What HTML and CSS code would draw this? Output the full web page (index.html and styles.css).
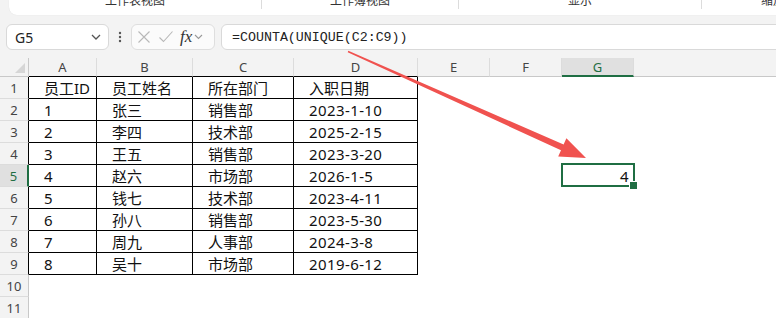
FILE: index.html
```html
<!DOCTYPE html>
<html lang="zh-CN">
<head>
<meta charset="utf-8">
<title>COUNTA UNIQUE</title>
<link rel="stylesheet" href="styles.css">
</head>
<body>
<div class="ribbon">
  <div class="rgroup g1"><span class="rlabel">工作表视图</span></div><span class="sep"></span>
  <div class="rgroup g2"><span class="rlabel">工作簿视图</span></div><span class="sep"></span>
  <div class="rgroup g3"><span class="rlabel">显示</span></div><span class="sep"></span>
  <div class="rgroup g4"><span class="rlabel">缩放</span></div>
</div>

<div class="fbar">
  <div class="namebox">
    <span class="ref">G5</span>
    <svg class="chev" width="10" height="6" viewBox="0 0 10 6"><path d="M1 1 L5 5 L9 1" fill="none" stroke="#555" stroke-width="1.3"/></svg>
  </div>
  <div class="dots">
    <svg width="4" height="12" viewBox="0 0 4 12"><circle cx="2" cy="2" r="1.2" fill="#555"/><circle cx="2" cy="6" r="1.2" fill="#555"/><circle cx="2" cy="10" r="1.2" fill="#555"/></svg>
  </div>
  <div class="fxbox">
    <svg class="ico" width="14" height="14" viewBox="0 0 14 14"><path d="M1.5 1.5 L12.5 12.5 M12.5 1.5 L1.5 12.5" stroke="#b8b8b8" stroke-width="1.1" fill="none"/></svg>
    <svg class="ico" width="16" height="14" viewBox="0 0 16 14"><path d="M1.5 7.5 L5.5 11.5 L14.5 1.5" stroke="#b8b8b8" stroke-width="1.1" fill="none"/></svg>
    <span class="fx">fx</span>
    <svg class="chev2" width="9" height="6" viewBox="0 0 9 6"><path d="M1 1 L4.5 4.5 L8 1" fill="none" stroke="#999" stroke-width="1.1"/></svg>
  </div>
  <div class="formula"><span class="ftext">=COUNTA(UNIQUE(C2:C9))</span></div>
</div>

<div class="sheet">
  <div class="corner"><span class="tri"></span></div>
  <div class="ch tb">A</div><div class="ch tb">B</div><div class="ch tb">C</div><div class="ch tb">D</div><div class="ch">E</div><div class="ch">F</div><div class="ch sel">G</div><div class="ch last"></div>

  <div class="rh tb">1</div><div class="cell tb">员工ID</div><div class="cell tb">员工姓名</div><div class="cell tb">所在部门</div><div class="cell tb">入职日期</div><div class="cell"></div><div class="cell"></div><div class="cell"></div><div class="cell"></div>
  <div class="rh tb">2</div><div class="cell tb num">1</div><div class="cell tb">张三</div><div class="cell tb">销售部</div><div class="cell tb num">2023-1-10</div><div class="cell"></div><div class="cell"></div><div class="cell"></div><div class="cell"></div>
  <div class="rh tb">3</div><div class="cell tb num">2</div><div class="cell tb">李四</div><div class="cell tb">技术部</div><div class="cell tb num">2025-2-15</div><div class="cell"></div><div class="cell"></div><div class="cell"></div><div class="cell"></div>
  <div class="rh tb">4</div><div class="cell tb num">3</div><div class="cell tb">王五</div><div class="cell tb">销售部</div><div class="cell tb num">2023-3-20</div><div class="cell"></div><div class="cell"></div><div class="cell"></div><div class="cell"></div>
  <div class="rh tb sel">5</div><div class="cell tb num">4</div><div class="cell tb">赵六</div><div class="cell tb">市场部</div><div class="cell tb num">2026-1-5</div><div class="cell"></div><div class="cell"></div><div class="cell active num">4</div><div class="cell"></div>
  <div class="rh tb">6</div><div class="cell tb num">5</div><div class="cell tb">钱七</div><div class="cell tb">技术部</div><div class="cell tb num">2023-4-11</div><div class="cell"></div><div class="cell"></div><div class="cell"></div><div class="cell"></div>
  <div class="rh tb">7</div><div class="cell tb num">6</div><div class="cell tb">孙八</div><div class="cell tb">销售部</div><div class="cell tb num">2023-5-30</div><div class="cell"></div><div class="cell"></div><div class="cell"></div><div class="cell"></div>
  <div class="rh tb">8</div><div class="cell tb num">7</div><div class="cell tb">周九</div><div class="cell tb">人事部</div><div class="cell tb num">2024-3-8</div><div class="cell"></div><div class="cell"></div><div class="cell"></div><div class="cell"></div>
  <div class="rh tb">9</div><div class="cell tb num">8</div><div class="cell tb">吴十</div><div class="cell tb">市场部</div><div class="cell tb num">2019-6-12</div><div class="cell"></div><div class="cell"></div><div class="cell"></div><div class="cell"></div>
  <div class="rh">10</div><div class="cell"></div><div class="cell"></div><div class="cell"></div><div class="cell"></div><div class="cell"></div><div class="cell"></div><div class="cell"></div><div class="cell"></div>
  <div class="rh">11</div><div class="cell"></div><div class="cell"></div><div class="cell"></div><div class="cell"></div><div class="cell"></div><div class="cell"></div><div class="cell"></div><div class="cell"></div>
</div>

<svg class="arrow" width="776" height="318" viewBox="0 0 776 318">
  <polygon points="348.3,50.8 563.6,144.5 566.4,138.3 586,158 558.2,156.5 561,150.3 347.7,52.2" fill="#f0524f"/>
</svg>
</body>
</html>
```

FILE: styles.css
```css
* { box-sizing: border-box; }

html, body {
  margin: 0;
  padding: 0;
  width: 776px;
  height: 318px;
  overflow: hidden;
}

body {
  position: relative;
  background: #f3f3f3;
  font-family: "Noto Sans", "Noto Sans CJK SC", sans-serif;
  color: #222;
}

/* ribbon strip (cut at top) */
.ribbon {
  display: flex;
  align-items: flex-start;
  height: 15px;
  margin-left: 9px;
  margin-right: -40px;
  background: #fff;
  border-radius: 0 0 8px 8px;
  overflow: hidden;
  box-shadow: 0 0 1px rgba(0,0,0,0.12);
}

.rgroup {
  display: flex;
  justify-content: center;
  flex: none;
}
.g1 { width: 252px; }
.g2 { width: 196px; }
.g3 { width: 242px; }
.g4 { width: 142px; }

.rlabel {
  font-size: 12px;
  line-height: 14px;
  margin-top: -6px;
  color: #333;
  white-space: nowrap;
}

.sep {
  flex: none;
  width: 1px;
  height: 9px;
  background: #dcdcdc;
}

/* formula bar */
.fbar {
  display: flex;
  align-items: stretch;
  height: 26px;
  margin-top: 9px;
  padding-left: 6px;
}

.namebox {
  flex: none;
  width: 103px;
  display: flex;
  align-items: center;
  justify-content: space-between;
  padding: 0 7px 0 8px;
  background: #fff;
  border: 1px solid #d9d9d9;
  border-radius: 6px;
}

.ref {
  font-size: 14px;
  color: #222;
}

.dots {
  flex: none;
  width: 22px;
  display: flex;
  align-items: center;
  justify-content: center;
}

.fxbox {
  flex: none;
  width: 84px;
  display: flex;
  align-items: center;
  padding-left: 5px;
  background: #fbfbfb;
  border: 1px solid #dedede;
  border-radius: 6px;
}
.fxbox .ico { flex: none; margin-right: 7px; }
.fxbox .ico + .ico { margin-right: 6px; }

.fx {
  font-family: "Liberation Serif", "DejaVu Serif", serif;
  font-style: italic;
  font-size: 17px;
  color: #333;
  line-height: 20px;
  margin-right: 2px;
}

.formula {
  flex: 1;
  margin-left: 6px;
  margin-right: -20px;
  display: flex;
  align-items: center;
  padding-left: 10px;
  background: #fff;
  border: 1px solid #d9d9d9;
  border-radius: 6px;
}

.ftext {
  font-family: "Liberation Mono", "DejaVu Sans Mono", monospace;
  font-size: 13.3px;
  color: #222;
  white-space: nowrap;
}

/* sheet grid */
.sheet {
  display: grid;
  grid-template-columns: 29px 68px 96px 101px 124px 72px 72px 72px 1fr;
  grid-template-rows: 19px repeat(11, 22px);
  margin-top: 8px;
}

.corner {
  position: relative;
  background: #f3f3f3;
  border-right: 1px solid #c8c8c8;
  border-bottom: 1px solid #c8c8c8;
}
.tri {
  position: absolute;
  right: 3px;
  bottom: 3px;
  width: 0;
  height: 0;
  border-left: 10px solid transparent;
  border-bottom: 10px solid #d6d6d6;
}

.ch {
  background: #f3f3f3;
  border-right: 1px solid #dcdcdc;
  border-bottom: 1px solid #c8c8c8;
  font-size: 13px;
  line-height: 18px;
  text-align: center;
  color: #444;
}
.ch.tb { border-bottom-color: #000; }
.ch.sel {
  background: #e0e0e0;
  color: #1f6e43;
  border-bottom: 2px solid #1f6e43;
}
.ch.last { border-right: none; }

.rh {
  display: flex;
  align-items: center;
  justify-content: center;
  background: #f3f3f3;
  border-right: 1px solid #c8c8c8;
  border-bottom: 1px solid #dcdcdc;
  font-size: 13px;
  color: #444;
}
.rh.tb { border-right-color: #000; }
.rh.sel {
  background: #e0e0e0;
  color: #1f6e43;
  border-right: 2px solid #1f6e43;
}

.cell {
  display: flex;
  align-items: center;
  padding-left: 15px;
  background: #fff;
  border-right: 1px solid #fff;
  border-bottom: 1px solid #fff;
  font-size: 15px;
  color: #111;
  white-space: nowrap;
}
.cell.tb {
  border-right-color: #000;
  border-bottom-color: #000;
}
.cell.num { letter-spacing: 0.4px; }

.cell.active {
  position: relative;
  z-index: 2;
  justify-content: flex-end;
  padding-right: 4px;
}
.cell.active::after {
  content: "";
  position: absolute;
  left: -1px;
  top: -2px;
  right: -2px;
  bottom: -1px;
  border: 2px solid #1f6e43;
}
.cell.active::before {
  content: "";
  position: absolute;
  right: -5px;
  bottom: -4px;
  width: 7px;
  height: 7px;
  background: #1f6e43;
  border: 1px solid #fff;
  z-index: 3;
}

.arrow {
  position: absolute;
  left: 0;
  top: 0;
  z-index: 10;
  pointer-events: none;
}
```
